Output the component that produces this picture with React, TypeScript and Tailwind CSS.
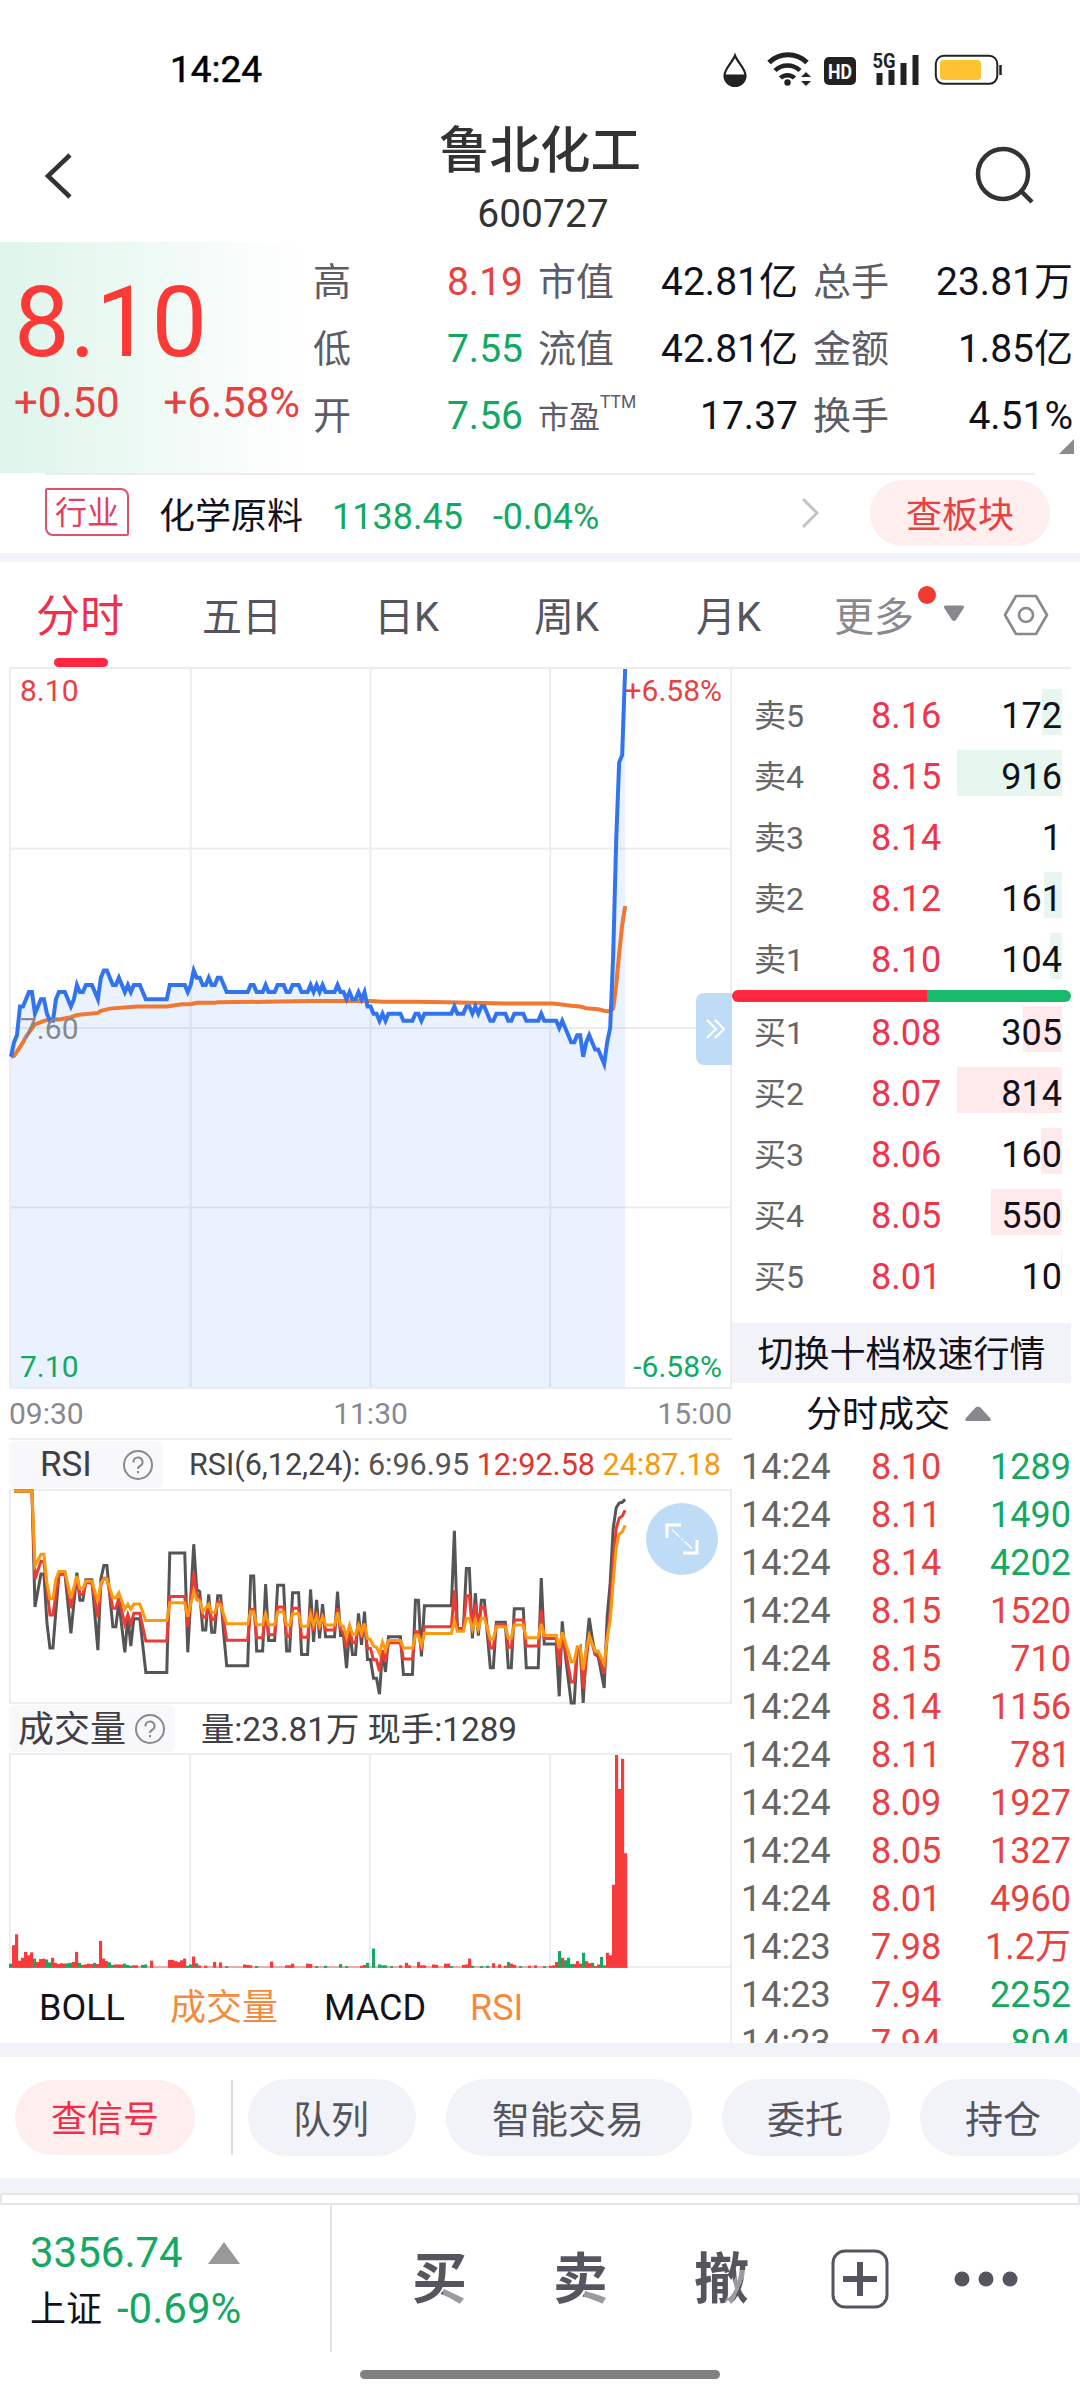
import { ReactNode } from 'react';
import clsx from 'clsx';

type Tone = 'up' | 'down' | 'plain';

const tones: Record<Tone, string> = {
  up: 'text-[#e8413f]',
  down: 'text-[#14a963]',
  plain: 'text-[#12121c]',
};

const stats: { label: string; value: string; tone: Tone; sup?: string }[][] = [
  [
    { label: '高', value: '8.19', tone: 'up' },
    { label: '低', value: '7.55', tone: 'down' },
    { label: '开', value: '7.56', tone: 'down' },
  ],
  [
    { label: '市值', value: '42.81亿', tone: 'plain' },
    { label: '流值', value: '42.81亿', tone: 'plain' },
    { label: '市盈', value: '17.37', tone: 'plain', sup: 'TTM' },
  ],
  [
    { label: '总手', value: '23.81万', tone: 'plain' },
    { label: '金额', value: '1.85亿', tone: 'plain' },
    { label: '换手', value: '4.51%', tone: 'plain' },
  ],
];

// bar is the width in px of the depth bar behind the volume
const asks = [
  { label: '卖5', price: '8.16', vol: '172', bar: 20 },
  { label: '卖4', price: '8.15', vol: '916', bar: 105 },
  { label: '卖3', price: '8.14', vol: '1', bar: 0 },
  { label: '卖2', price: '8.12', vol: '161', bar: 18 },
  { label: '卖1', price: '8.10', vol: '104', bar: 12 },
];

const bids = [
  { label: '买1', price: '8.08', vol: '305', bar: 39 },
  { label: '买2', price: '8.07', vol: '814', bar: 105 },
  { label: '买3', price: '8.06', vol: '160', bar: 21 },
  { label: '买4', price: '8.05', vol: '550', bar: 71 },
  { label: '买5', price: '8.01', vol: '10', bar: 1 },
];

const trades: [string, string, string, Tone][] = [
  ['14:24', '8.10', '1289', 'down'],
  ['14:24', '8.11', '1490', 'down'],
  ['14:24', '8.14', '4202', 'down'],
  ['14:24', '8.15', '1520', 'up'],
  ['14:24', '8.15', '710', 'up'],
  ['14:24', '8.14', '1156', 'up'],
  ['14:24', '8.11', '781', 'up'],
  ['14:24', '8.09', '1927', 'up'],
  ['14:24', '8.05', '1327', 'up'],
  ['14:24', '8.01', '4960', 'up'],
  ['14:23', '7.98', '1.2万', 'up'],
  ['14:23', '7.94', '2252', 'down'],
  ['14:23', '7.94', '804', 'down'],
];

// minute,ticks away from the previous close
const priceLine =
  '0,-4 1,-2 2,-1 3,3 4,3 6,5 7,5 8,2 10,4 11,4 12,2 13,1 14,1 15,4 16,5 18,5 20,3 21,4 22,6 23,5 24,5 25,6 27,6 28,5 29,4 30,7 31,8 32,8 34,6 35,6 36,7 38,5 39,6 40,5 41,6 43,6 45,4 52,4 53,6 58,6 59,5 60,6 61,8 62,7 63,7 64,6 65,6 66,7 67,6 68,6 69,7 70,7 72,5 79,5 80,6 81,6 82,5 84,5 85,6 86,5 88,5 89,6 91,6 92,5 93,5 94,6 96,6 97,5 99,5 100,6 101,5 102,6 103,5 104,6 105,5 108,5 109,6 110,5 111,5 112,4 113,5 114,4 115,4 116,5 117,4 118,5 119,3 120,3 121,2 122,2 123,1 124,2 125,1 126,2 130,2 131,1 134,1 135,2 136,2 137,1 138,2 147,2 148,3 149,2 151,2 152,3 153,3 154,2 155,3 156,2 157,3 158,3 160,1 161,1 162,2 165,2 166,1 167,1 168,2 171,2 172,1 176,1 177,2 178,1 182,1 183,0 184,1 187,-2 188,-2 189,-1 190,-1 191,-4 192,-2 193,-1 195,-3 196,-3 198,-5 199,-2 200,0 201,10 202,26 203,37 204,38 205,50';

const avgLine =
  '0,-4 1,-3.9 4,-2 5,-1.2 8,.5 11,1 13,1.2 16,1.2 20,1.5 22,1.8 29,2.1 30,2.4 33,2.7 42,3 52,3 57,3.3 60,3.3 62,3.5 68,3.5 69,3.6 85,3.65 100,3.75 120,3.75 124,3.65 135,3.65 150,3.55 165,3.4 181,3.4 187,3.1 190,3 192,2.75 196,2.6 198,2.4 199,2.35 200,2.4 201,2.7 202,6 203,10.3 204,14.3 205,17';

const rsi6 =
  '1,260 7,260 8,537 10,458 11,458 12,575 13,635 14,635 15,545 16,460 18,457 20,600 22,455 23,521 24,521 25,472 27,472 29,640 30,470 31,438 32,438 34,584 35,584 36,525 38,645 39,560 40,630 41,565 43,565 45,693 52,693 53,408 58,408 59,645 61,387 62,495 63,500 64,592 65,592 66,507 67,597 68,597 69,510 70,510 71,600 72,677 79,677 80,463 81,463 82,642 84,642 85,482 86,617 88,617 89,485 91,485 92,642 93,642 94,503 96,503 97,650 99,650 100,495 101,620 102,520 103,612 104,530 105,608 108,608 109,500 110,605 111,605 112,683 113,590 114,650 115,650 116,552 117,627 118,548 119,662 120,662 121,707 122,707 123,745 124,640 125,692 126,608 130,608 131,698 134,698 135,521 136,521 137,655 138,534 147,534 148,355 149,588 151,588 152,445 153,445 154,612 155,504 156,605 157,521 158,521 160,682 161,682 162,573 165,573 166,682 167,682 168,541 171,541 172,682 176,682 177,468 178,625 182,625 183,750 184,571 185,650 187,766 188,766 189,640 190,632 191,766 192,640 193,563 194,610 195,650 196,655 198,730 199,560 200,480 201,350 202,300 203,289 204,287 205,280';

const rsi12 =
  '1,260 7,260 8,470 10,428 11,430 13,556 14,556 16,460 18,457 20,540 22,465 23,507 24,507 25,478 27,480 29,562 30,485 31,468 32,468 34,540 35,540 36,515 38,578 39,555 40,578 41,552 43,552 45,618 52,618 53,512 58,512 59,585 61,455 62,510 63,515 64,560 65,562 66,530 67,567 68,567 69,525 70,525 72,616 79,616 80,543 81,543 82,610 84,610 85,550 86,603 88,603 89,537 91,537 92,607 93,607 94,540 96,540 97,609 99,609 100,540 101,595 102,548 103,590 104,555 105,592 108,592 109,540 110,590 111,600 112,635 113,590 114,622 115,622 116,575 117,610 118,575 119,636 120,636 121,663 122,663 123,690 124,640 125,668 126,622 130,622 131,661 134,661 135,596 136,596 137,640 138,584 147,584 148,497 149,590 151,590 152,510 153,510 154,585 155,530 156,580 157,538 158,538 160,635 161,635 162,579 165,579 166,633 167,633 168,568 171,568 172,630 176,630 177,545 178,612 182,612 183,678 184,600 187,716 188,716 189,640 190,635 191,732 193,600 195,650 196,650 198,695 199,610 200,550 201,430 202,350 203,325 204,320 205,306';

const rsi24 =
  '1,260 7,260 8,438 10,411 11,411 12,480 13,517 14,517 15,470 16,452 18,452 20,516 22,463 23,493 24,493 25,475 27,475 29,525 30,480 31,470 32,470 34,515 35,515 36,503 38,542 39,530 40,542 41,530 43,530 45,569 52,569 53,527 58,527 59,560 61,500 62,520 63,522 64,548 66,530 67,550 68,550 69,530 70,532 72,577 79,577 80,548 81,548 82,579 84,579 85,553 86,579 88,579 89,549 91,549 92,580 93,580 94,553 96,553 97,583 99,583 100,555 101,580 102,560 103,582 104,560 105,580 108,580 109,550 110,580 111,583 112,608 113,580 114,602 115,602 116,580 117,600 118,577 119,612 120,615 121,630 122,633 123,648 124,620 125,640 126,617 130,617 131,635 134,635 135,605 136,605 137,628 138,600 147,600 148,570 149,595 151,595 152,564 153,564 154,590 155,567 156,590 157,564 158,564 160,613 161,613 162,584 165,584 166,611 167,611 168,580 171,580 172,610 176,610 177,577 178,604 182,604 183,635 184,597 187,667 188,667 189,632 190,632 191,687 192,640 193,605 195,642 196,642 198,672 199,610 200,570 201,480 202,395 203,363 204,358 205,342';

// minute -> signed volume, negative bars are drawn green
const volumes: Record<number, number> = {
  0: -8, 1: 52, 2: 78, 3: 15, 4: 22, 5: 36, 6: 28, 7: 35, 8: -20, 9: 12, 10: 19, 11: 20, 12: -18, 13: -11, 14: 22, 15: 10,
  16: 7, 17: 9, 18: 8, 19: -9, 20: -10, 21: 12, 22: 36, 23: -10, 24: 5, 25: 6, 26: 8, 27: 7, 28: -10, 29: 7, 30: 62, 31: 20,
  32: 14, 33: -11, 34: -5, 35: 6, 36: 6, 37: 6, 38: -8, 39: -5, 40: -3, 41: 4, 42: 4, 44: -5, 45: -6, 47: 15, 53: 17, 54: 17,
  55: 14, 56: 12, 57: 16, 58: 20, 59: -3, 60: -6, 61: 25, 62: -9, 63: 4, 65: 3, 68: 12, 70: 11, 72: -2, 78: 6, 79: 5, 80: 4, 82: -2,
  87: 13, 92: 4, 93: 4, 94: 8, 99: 8, 100: 7, 102: -2, 105: -3, 110: -7, 112: -2, 117: 3, 118: 5, 119: -10, 121: -44, 123: -6,
  124: -4, 125: -4, 127: -2, 130: 4, 132: 10, 133: 4, 136: 12, 137: 4, 138: 4, 141: 6, 142: 5, 145: 8, 146: 8, 147: -2, 151: 5, 152: 6,
  153: 20, 154: -3, 157: -2, 159: -3, 161: 9, 163: 6, 165: 3, 166: -12, 167: 8, 168: 5, 170: -2, 173: 3, 175: 4, 178: -2, 180: 3,
  181: 4, 182: 12, 183: -38, 184: 22, 185: -16, 186: -22, 187: -7, 188: 7, 189: 14, 190: 8, 191: -34, 192: 14, 193: 9, 194: -10,
  195: 2, 196: 6, 197: -24, 198: -4, 199: 34, 200: 28, 201: 196, 202: 505, 203: 424, 204: 496, 205: 271,
};

const pills = [
  { label: '队列', size: 'w-[168px]' },
  { label: '智能交易', size: 'w-[246px]' },
  { label: '委托', size: 'w-[168px]' },
  { label: '持仓', size: 'w-[168px]' },
];

function StatusBar() {
  return (
    <div className="flex h-[124px] items-center justify-between pt-[15px] pr-[77px] pl-[170px]">
      <span className="text-[37px] leading-none text-black [-webkit-text-stroke:0.5px_black]">14:24</span>
      <svg width="281" height="42" viewBox="722 48 281 42" fill="none">
        <path d="M735 54.500C732 62 724.500 68 724.500 74.500a10.500 10.500 0 0 0 21 0C745.500 68 738 62 735 54.500z" stroke="#222" strokeWidth="2.200" />
        <path d="M724.500 73.500h21v1a10.500 10.500 0 0 1-21 0z" fill="#222" />
        <g stroke="#222" strokeWidth="5">
          <path d="M769 61.500a27 27 0 0 1 38 0" />
          <path d="M775 69.500a18 18 0 0 1 25 0" strokeWidth="4.500" />
          <path d="M780.500 77a10 10 0 0 1 14 0" strokeWidth="4.500" />
        </g>
        <circle cx="787.500" cy="81.500" r="3.200" fill="#222" />
        <path d="M806 70.500l6 6h-12zM806 85.500l-6-6h12z" fill="#222" stroke="#fff" strokeWidth="1" />
        <rect x="824" y="56" width="32" height="28" rx="5" fill="#222" />
        <text x="840" y="77.500" textAnchor="middle" fontFamily="Roboto" fontSize="21" fontWeight="700" textLength="24" lengthAdjust="spacingAndGlyphs" fill="#fff">HD</text>
        <text x="872.500" y="66.500" fontFamily="Roboto" fontSize="20" fontWeight="700" textLength="23" lengthAdjust="spacingAndGlyphs" fill="#222">5G</text>
        <path d="M879.500 72v12M891.500 69v15M903.500 62v22M915.500 54v30" stroke="#222" strokeWidth="6" />
        <rect x="935.800" y="54.800" width="61.500" height="28" rx="8" stroke="#222" strokeWidth="2" />
        <rect x="940" y="59" width="41" height="20" rx="4" fill="#ffc233" />
        <path d="M1000.500 64v10" stroke="#222" strokeWidth="2.500" />
      </svg>
    </div>
  );
}

function Header() {
  return (
    <div className="flex h-[118px] items-start justify-between px-[45px]">
      <svg className="mt-[28px]" width="30" height="48" viewBox="0 0 30 48" fill="none">
        <path d="M25 3L3 24l22 21" stroke="#333" strokeWidth="4.500" />
      </svg>
      <div className="flex flex-col items-center pl-[30px] text-[#333]">
        <span className="text-[50.500px] leading-[54px] font-medium">鲁北化工</span>
        <span className="mt-[15px] ml-[6px] text-[39px] leading-[42px]">600727</span>
      </div>
      <svg className="mt-[21px]" width="60" height="62" viewBox="0 0 60 62" fill="none" stroke="#333" strokeWidth="4.500">
        <circle cx="28" cy="29" r="25" />
        <path d="M46 46l11 11" />
      </svg>
    </div>
  );
}

function Quote() {
  return (
    <div className="relative flex h-[231px]">
      <div className="w-[304px] shrink-0 bg-gradient-to-r from-[#def5eb] to-white pl-[14px]">
        <div className="pt-[30px] text-[99px] leading-[100px] text-[#fb3a38]">8.10</div>
        <div className="mt-[10px] flex justify-between text-[42px] leading-[42px] text-[#e8413f]">
          <span>+0.50</span>
          <span className="pr-[4px]">+6.58%</span>
        </div>
      </div>
      {stats.map((col, i) => (
        <div
          key={i}
          className={clsx(
            'flex shrink-0 flex-col pt-[7px]',
            i === 0 && 'ml-[9px] w-[210px]',
            i === 1 && 'ml-[15px] w-[260px]',
            i === 2 && 'ml-[15px] w-[260px]'
          )}
        >
          {col.map((s) => (
            <div key={s.label} className="flex h-[67px] items-center justify-between">
              <span className={clsx('flex whitespace-nowrap text-[#5c5d66]', s.sup ? 'pt-1 text-[31px]' : 'text-[38px]')}>
                {s.label}
                {s.sup && <sup className="top-[-3px] text-[17.500px] leading-[20px]">{s.sup}</sup>}
              </span>
              <span className={clsx('text-[39px]', tones[s.tone])}>{s.value}</span>
            </div>
          ))}
        </div>
      ))}
      <svg className="absolute right-[6px] bottom-[19px]" width="15" height="15">
        <path d="M15 0v15H0z" fill="#8a8a90" />
      </svg>
    </div>
  );
}

function Industry() {
  return (
    <div>
      <div className="mx-[45px] h-[2px] bg-[#ededed]" />
      <div className="flex h-[78px] items-center pr-[30px] pl-[45px] text-[36px]">
        <span className="mb-1 flex h-[48px] w-[84px] items-center justify-center rounded-tl-xs rounded-tr-lg rounded-br-xs rounded-bl-lg border-2 border-[#e2506f] pt-[2px] text-[32px] text-[#e2405f]">
          行业
        </span>
        <span className="ml-[30px] pt-[5px] text-[#12121c]">化学原料</span>
        <span className="ml-[29px] pt-[5px] text-[#14a963]">1138.45</span>
        <span className="ml-[30px] pt-[5px] text-[#14a963]">-0.04%</span>
        <svg className="mr-[51px] mb-[2px] ml-auto" width="18" height="30" viewBox="0 0 18 30" fill="none">
          <path d="M2 1l14 14L2 29" stroke="#c4c4c8" strokeWidth="3" />
        </svg>
        <span className="mb-[3px] flex h-[66px] w-[180px] items-center justify-center rounded-full bg-[#ffeeee] pt-[7px] text-[#e8413f]">查板块</span>
      </div>
      <div className="h-[9px] bg-[#f2f3f8]" />
    </div>
  );
}

function PeriodTabs() {
  return (
    <div className="flex h-[105px] text-[40px] leading-[111px] text-[#54555e]">
      <div className="relative ml-[36px] w-[166px] text-[44px] text-[#f0304a]">
        分时
        <div className="absolute bottom-0 left-[18px] h-[9px] w-[54px] rounded-full bg-[#ff2740]" />
      </div>
      <div className="w-[172px]">五日</div>
      <div className="w-[160px]">日K</div>
      <div className="w-[162px]">周K</div>
      <div className="w-[138px]">月K</div>
      <div className="relative w-[82px] text-[#88888e]">
        更多
        <span className="absolute top-[24px] right-[-20px] size-[18px] rounded-full bg-[#f23a30]" />
      </div>
      <svg className="mt-[42px] ml-[27px]" width="22" height="18" viewBox="0 0 22 18">
        <path d="M3 1.500h16q3 0 1.500 3L13 16q-2 2-4 0L1.500 4.500Q0 1.500 3 1.500z" fill="#88888e" />
      </svg>
      <svg className="mt-[32px] ml-[38px]" width="46" height="42" viewBox="0 0 46 42" fill="none" stroke="#88888e" strokeWidth="2.600">
        <path d="M13 2h20l11 19-11 19H13L2 21z" strokeLinejoin="round" />
        <circle cx="23" cy="21" r="7" />
      </svg>
    </div>
  );
}

function VerticalGrid({ top, bottom }: { top: number; bottom: number }) {
  return (
    <g stroke="#ededf0" strokeWidth="2">
      {[60, 120, 180].map((m) => (
        <line key={m} x1={m} x2={m} y1={top} y2={bottom} vectorEffect="non-scaling-stroke" />
      ))}
    </g>
  );
}

function Line({ points, color, width = 4 }: { points: string; color: string; width?: number }) {
  return <polyline points={points} fill="none" stroke={color} strokeWidth={width} vectorEffect="non-scaling-stroke" />;
}

function PriceChart() {
  return (
    <div className="relative h-[720px] border-x-2 border-b-2 border-[#ededf0] text-[30px] leading-[34px]">
      <svg className="block overflow-visible" width="719" height="718" viewBox="0 -50 240 100" preserveAspectRatio="none">
        <VerticalGrid top={-50} bottom={50} />
        <g stroke="#ededf0" strokeWidth="2">
          {[-25, 0, 25].map((y) => (
            <line key={y} x1="0" x2="240" y1={y} y2={y} vectorEffect="non-scaling-stroke" />
          ))}
        </g>
        <g transform="scale(1 -1)">
          <polygon points={`0,-50 ${priceLine} 205,-50`} fill="#2f7bff" fillOpacity="0.1" />
          <Line points={avgLine} color="#f07830" />
          <Line points={priceLine} color="#3274f0" />
        </g>
      </svg>
      <span className="absolute top-[5px] left-[9px] text-[#e8413f]">8.10</span>
      <span className="absolute top-[343px] left-[9px] text-[#88888e]">7.60</span>
      <span className="absolute bottom-[3px] left-[9px] text-[#14a963]">7.10</span>
      <span className="absolute top-[5px] right-[8px] text-[#e8413f]">+6.58%</span>
      <span className="absolute right-[8px] bottom-[3px] text-[#14a963]">-6.58%</span>
      <div className="absolute top-[324px] right-[-2px] flex h-[72px] w-[36px] items-center justify-center rounded-l-lg bg-[#bfdcf6]">
        <svg className="ml-1" width="20" height="20" viewBox="0 0 20 20" fill="none" stroke="#fff" strokeWidth="2.200">
          <path d="M1 1l9 9-9 9M9 1l9 9-9 9" />
        </svg>
      </div>
    </div>
  );
}

function HelpIcon() {
  return (
    <svg className="mb-[2px]" width="32" height="32" viewBox="0 0 32 32" fill="none" stroke="#88888e" strokeWidth="2">
      <circle cx="16" cy="16" r="14" />
      <path d="M11.500 13.500a4.500 4.500 0 1 1 6.500 3.500q-2 1-2 3" />
      <path d="M16 22v2.200" />
    </svg>
  );
}

function IndicatorHeader({ name, wide, children }: { name: string; wide?: boolean; children: ReactNode }) {
  return (
    <div className="flex h-[49px] items-center whitespace-nowrap">
      <div
        className={clsx(
          'flex h-[47px] shrink-0 items-center justify-between rounded-md bg-[#f8f8fa] text-[#404044]',
          wide ? 'w-[166px] pt-[2px] pr-[9px] pl-[9px] text-[36px]' : 'w-[154px] pt-[2px] pr-[9px] pl-[31px] text-[35px]'
        )}
      >
        {name}
        <HelpIcon />
      </div>
      {children}
    </div>
  );
}

function RsiChart() {
  return (
    <div className="relative h-[215px] border-2 border-[#ededf0]">
      <svg className="block overflow-visible" width="719" height="212" viewBox="0 260 240 506" preserveAspectRatio="none">
        <Line points={rsi6} color="#555" width={3} />
        <Line points={rsi12} color="#e83c34" width={3} />
        <Line points={rsi24} color="#fa9a10" width={3} />
      </svg>
      <div className="absolute top-[12px] right-[12px] flex size-[72px] items-center justify-center rounded-full bg-[#bfdcf6]">
        <svg width="34" height="34" viewBox="0 0 34 34" fill="none" stroke="#fff">
          <path d="M2 16V3h14M32 18v13H18" strokeWidth="3" />
          <path d="M7 7.500l20 19" strokeWidth="1.200" strokeDasharray="11 2 2 2" />
        </svg>
      </div>
    </div>
  );
}

function VolumeChart() {
  return (
    <div className="h-[215px] border-2 border-[#ededf0]">
      <svg className="-ml-px block overflow-visible" width="720" height="212" viewBox="0 0 240 505" preserveAspectRatio="none">
        <VerticalGrid top={0} bottom={505} />
        <rect x="0" y="503" width="206" height="4" fill="#f0a0a0" />
        {Object.entries(volumes).map(([minute, v]) => (
          <rect key={minute} x={Number(minute) - 0.33} y={505 - Math.abs(v)} width="1.05" height={Math.abs(v) + 2} fill={v < 0 ? '#14a963' : '#f93a3a'} />
        ))}
      </svg>
    </div>
  );
}

function BookRow({ row, side }: { row: (typeof asks)[number]; side: 'ask' | 'bid' }) {
  return (
    <div className="relative flex h-[61px] items-center pr-[9px] pl-[22px] text-[36px]">
      <div
        className={clsx('absolute top-[4px] right-[9px] h-[46px]', side === 'ask' ? 'bg-[#e7f6ef]' : 'bg-[#ffe9ea]')}
        style={{ width: row.bar }}
      />
      <span className="relative w-[117px] text-[32px] text-[#666]">{row.label}</span>
      <span className="relative text-[#f0344a]">{row.price}</span>
      <span className="relative ml-auto text-[#12121c]">{row.vol}</span>
    </div>
  );
}

function OrderBook() {
  return (
    <div className="flex h-[1374px] w-[339px] flex-col overflow-hidden">
      <div className="shrink-0 pt-[16px]">
        {asks.map((row) => (
          <BookRow key={row.label} row={row} side="ask" />
        ))}
      </div>
      <div className="flex h-[12px] shrink-0 overflow-hidden rounded-full">
        <div className="w-[195px] bg-[#ff2740]" />
        <div className="flex-1 bg-[#18ba6c]" />
      </div>
      <div className="shrink-0">
        {bids.map((row) => (
          <BookRow key={row.label} row={row} side="bid" />
        ))}
      </div>
      <div className="mt-[16px] flex h-[60px] shrink-0 items-center justify-center bg-[#f2f3f8] pt-[3px] text-[36px] text-[#12121c]">
        切换十档极速行情
      </div>
      <div className="flex h-[60px] shrink-0 items-center justify-center gap-[14px] pt-[4px] pr-[5px] text-[36px] text-[#12121c]">
        分时成交
        <svg className="mb-[2px]" width="28" height="16" viewBox="0 0 28 16">
          <path d="M11 2q3-3 6 0l9 10q2 3-1 3H3q-3 0-1-3z" fill="#88888e" />
        </svg>
      </div>
      {trades.map(([time, price, vol, tone], i) => (
        <div key={i} className="flex h-[48px] shrink-0 items-center pl-[9px] text-[36px]">
          <span className="w-[130px] text-[#666]">{time}</span>
          <span className={tones.up}>{price}</span>
          <span className={clsx('ml-auto', tones[tone])}>{vol}</span>
        </div>
      ))}
    </div>
  );
}

function Charts() {
  return (
    <div className="w-[723px]">
      <PriceChart />
      <div className="flex h-[49px] items-center justify-between text-[30px] text-[#88888e]">
        <span>09:30</span>
        <span>11:30</span>
        <span>15:00</span>
      </div>
      <div className="h-[2px] bg-[#ededf0]" />
      <IndicatorHeader name="RSI">
        <span className="ml-[26px] pt-px text-[30.500px] text-[#444]">
          RSI(6,12,24): <span className="text-[#555]">6:96.95</span> <span className="text-[#e0342e]">12:92.58</span>{' '}
          <span className="text-[#f59a10]">24:87.18</span>
        </span>
      </IndicatorHeader>
      <RsiChart />
      <IndicatorHeader name="成交量" wide>
        <span className="ml-[26px] pt-[2px] text-[33.300px] text-[#404044]">量:23.81万 现手:1289</span>
      </IndicatorHeader>
      <VolumeChart />
      <div className="flex h-[75px] items-center border-r-2 border-[#ededf0] pt-1 pl-[30px] text-[36px] text-[#12121c]">
        <span className="w-[131px]">BOLL</span>
        <span className="w-[154px] text-[#f58a3c]">成交量</span>
        <span className="w-[146px]">MACD</span>
        <span className="text-[#f58a3c]">RSI</span>
      </div>
    </div>
  );
}

function Shortcuts() {
  return (
    <div className="flex h-[121px] items-center overflow-hidden pl-[15px]">
      <span className="flex h-[75px] w-[180px] shrink-0 items-center justify-center rounded-full bg-[#ffeeee] pt-[4px] text-[36px] text-[#f0304a]">
        查信号
      </span>
      <div className="mr-[15px] ml-[36px] h-[75px] w-[2px] shrink-0 bg-[#dcdce0]" />
      <div className="flex gap-[30px]">
        {pills.map(({ label, size }) => (
          <span
            key={label}
            className={clsx(
              'flex h-[77px] shrink-0 items-center justify-center rounded-full bg-[#f2f3f8] pt-[5px] pr-[2px] text-[38px] text-[#54555e]',
              size
            )}
          >
            {label}
          </span>
        ))}
      </div>
    </div>
  );
}

// the last stroke of each glyph is painted in a lighter grey
const accentText = 'w-[56px] bg-[#54555e] bg-clip-text bg-no-repeat text-[55px] leading-[60px] font-bold text-transparent';

function BottomBar() {
  return (
    <div className="flex h-[147px]">
      <div className="flex w-[330px] flex-col pt-[24px] pl-[30px] text-[42px] leading-[48px] text-[#14a963]">
        <div className="flex items-center gap-[25px]">
          3356.74
          <svg width="32" height="22">
            <path d="M16 0l16 22H0z" fill="#999" />
          </svg>
        </div>
        <div className="mt-[7px] flex items-center gap-[15px]">
          <span className="pt-[2px] text-[36px] text-[#12121c]">上证</span>
          -0.69%
        </div>
      </div>
      <div className="w-[2px] bg-[#e4e4e8]" />
      <div className="flex items-center pt-px pl-[80px]">
        <span className={clsx(accentText, 'bg-[linear-gradient(#9a9aa0,#9a9aa0)] bg-[length:25px_16px] bg-[position:31px_41px]')}>买</span>
        <span className={clsx(accentText, 'ml-[85px] bg-[linear-gradient(#9a9aa0,#9a9aa0)] bg-[length:25px_14px] bg-[position:31px_43px]')}>卖</span>
        <span
          className={clsx(
            accentText,
            'ml-[85px] bg-[linear-gradient(113deg,transparent_38%,#9a9aa0_38%,#9a9aa0_62%,transparent_62%)] bg-[length:20px_36px] bg-[position:31px_21px]'
          )}
        >
          撤
        </span>
        <svg className="ml-[81px]" width="58" height="60" viewBox="0 0 58 60" fill="none" stroke="#54555e">
          <rect x="2" y="2" width="54" height="56" rx="12" strokeWidth="3" />
          <path d="M29 13v34M12 30h34" strokeWidth="6" />
        </svg>
        <svg className="ml-[65px]" width="66" height="16" viewBox="0 0 66 16" fill="#54555e">
          <circle cx="8" cy="8" r="7.500" />
          <circle cx="32" cy="8" r="7.500" />
          <circle cx="56" cy="8" r="7.500" />
        </svg>
      </div>
    </div>
  );
}

export default function App() {
  return (
    <div className="h-[2400px] w-[1080px] overflow-hidden bg-white font-['Roboto','Noto_Sans_CJK_SC',sans-serif]">
      <StatusBar />
      <Header />
      <Quote />
      <Industry />
      <PeriodTabs />
      <div className="ml-[9px] h-[2px] w-[1062px] bg-[#ededf0]" />
      <div className="flex h-[1374px] pl-[9px]">
        <Charts />
        <OrderBook />
      </div>
      <div className="h-[14px] bg-[#f2f3f8]" />
      <Shortcuts />
      <div className="h-[15px] bg-[#f2f3f8]" />
      <div className="h-[12px] border-2 border-[#e6e6e8]" />
      <BottomBar />
      <div className="mx-auto mt-[18px] h-[9px] w-[360px] rounded-full bg-[#808080]" />
    </div>
  );
}
